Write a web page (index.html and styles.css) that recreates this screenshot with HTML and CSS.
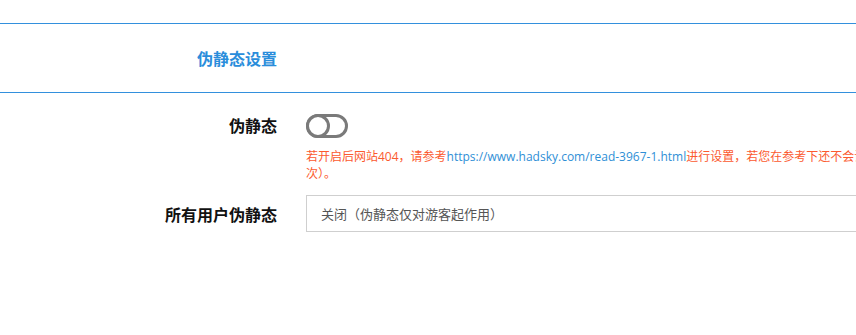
FILE: index.html
```html
<!DOCTYPE html>
<html lang="zh-CN">
<head>
<meta charset="utf-8">
<title>伪静态设置</title>
<link rel="stylesheet" href="styles.css">
</head>
<body>
<div class="page">
  <div class="section-head">
    <div class="label title">伪静态设置</div>
    <div></div>
  </div>
  <div class="form">
    <div class="row row-switch">
      <div class="label">伪静态</div>
      <div class="field">
        <span class="switch"><span class="knob"></span></span>
        <p class="help">若开启后网站404，请参考<a class="link" href="#">https://www.hadsky.com/read-3967-1.html</a>进行设置，若您在参考下还不会设置，请联系官方获取技术支持（收费服务，按<br>次）。</p>
      </div>
    </div>
    <div class="row row-select">
      <div class="label">所有用户伪静态</div>
      <div class="field">
        <div class="select">关闭（伪静态仅对游客起作用）</div>
      </div>
    </div>
  </div>
</div>
</body>
</html>
```

FILE: styles.css
```css
html, body {
  margin: 0;
  padding: 0;
  background: #fff;
  overflow: hidden;
}
body {
  font-family: "Noto Sans CJK SC", "Noto Sans", sans-serif;
  color: #222;
}
.page {
  width: 1300px;
  padding-top: 23px;
}
.section-head {
  display: grid;
  grid-template-columns: 277px 1fr;
  column-gap: 29px;
  border-top: 1px solid #3390dd;
  border-bottom: 1px solid #3390dd;
  padding: 22px 0;
}
.label {
  text-align: right;
  font-size: 16px;
  line-height: 24px;
  font-weight: 700;
  color: #111;
}
.title {
  color: #2a8ddb;
  font-weight: 600;
}
.form {
  padding-top: 21px;
}
.row {
  display: grid;
  grid-template-columns: 277px 1fr;
  column-gap: 29px;
}
.row-switch {
  align-items: start;
}
.row-switch .label {
  line-height: 22px;
}
.row-select {
  margin-top: 13px;
  align-items: center;
}
.field {
  min-width: 0;
}
.switch {
  display: block;
  position: relative;
  width: 42px;
  height: 24px;
  box-sizing: border-box;
  border: 3px solid #7a7a7a;
  border-radius: 12px;
  background: #fff;
}
.knob {
  position: absolute;
  left: -3px;
  top: -3px;
  width: 24px;
  height: 24px;
  box-sizing: border-box;
  border: 3px solid #7a7a7a;
  border-radius: 50%;
  background: #fff;
}
.help {
  margin: 10px 0 0;
  font-family: "Open Sans", "Noto Sans CJK SC", sans-serif;
  font-size: 12px;
  line-height: 17px;
  color: #fb5a2f;
  white-space: nowrap;
}
.link {
  color: #2f8fd6;
  text-decoration: none;
}
.select {
  width: 700px;
  height: 37px;
  box-sizing: border-box;
  border: 1px solid #cfcfcf;
  padding: 0 14px;
  font-size: 13px;
  line-height: 35px;
  color: #555;
}
```
